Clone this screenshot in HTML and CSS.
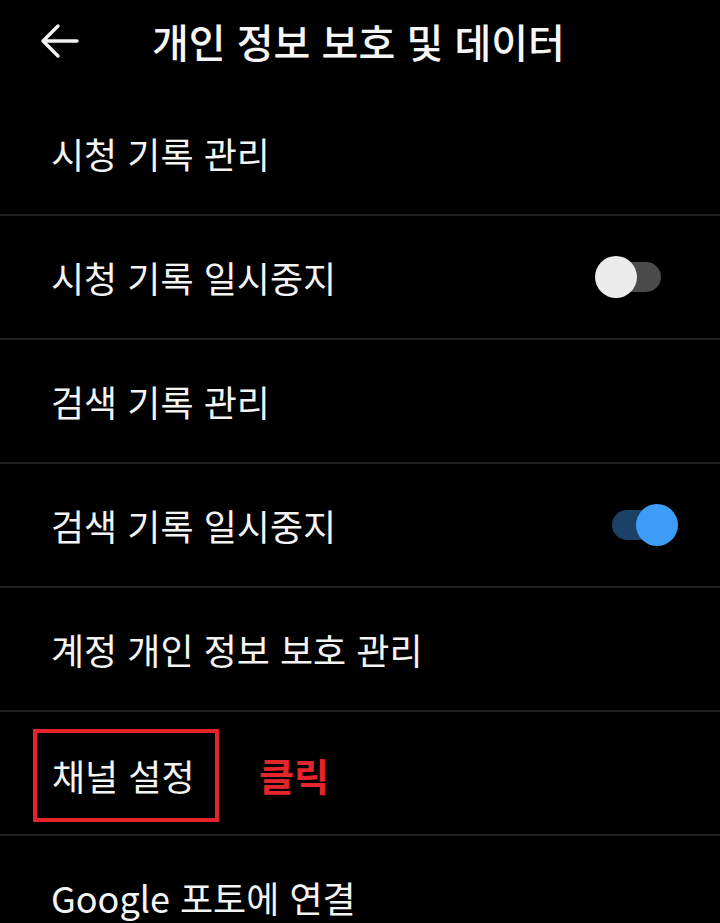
FILE: index.html
```html
<!DOCTYPE html>
<html lang="ko">
<head>
<meta charset="utf-8">
<link rel="stylesheet" href="styles.css">
</head>
<body>
<div class="screen">
  <header class="header">
    <span class="back">
      <svg width="40" height="36" viewBox="0 0 40 36"><path d="M38 18H4M19 3L4 18l15 15" fill="none" stroke="#f2f2f2" stroke-width="3.4" stroke-linecap="round" stroke-linejoin="round"/></svg>
    </span>
    <h1 class="title">개인 정보 보호 및 데이터</h1>
  </header>
  <ul class="list">
    <li class="row"><span class="label">시청 기록 관리</span></li>
    <li class="row"><span class="label">시청 기록 일시중지</span><span class="toggle off"><span class="knob"></span></span></li>
    <li class="row"><span class="label">검색 기록 관리</span></li>
    <li class="row"><span class="label">검색 기록 일시중지</span><span class="toggle on"><span class="knob"></span></span></li>
    <li class="row"><span class="label">계정 개인 정보 보호 관리</span></li>
    <li class="row"><span class="boxed"><span class="label">채널 설정</span></span><span class="click">클릭</span></li>
    <li class="row"><span class="label">Google 포토에 연결</span></li>
  </ul>
</div>
</body>
</html>
```
FILE: styles.css
```css
html, body {
  margin: 0;
  padding: 0;
  background: #000;
}
.screen {
  width: 720px;
  height: 923px;
  overflow: hidden;
  background: #000;
  color: #f4f4f4;
  font-family: "Noto Sans CJK KR", "Noto Sans", sans-serif;
}
.header {
  height: 92px;
  display: flex;
  align-items: center;
  box-sizing: border-box;
  padding-bottom: 10px;
}
.back {
  width: 40px;
  height: 36px;
  margin-left: 39px;
  display: flex;
}
.title {
  margin: 0 0 0 73px;
  font-size: 40px;
  font-weight: 500;
  letter-spacing: 0;
  color: #f6f6f6;
}
.list {
  list-style: none;
  margin: 0;
  padding: 0;
}
.row {
  height: 122px;
  border-bottom: 2px solid #1e1e1e;
  display: flex;
  align-items: center;
  padding-left: 51px;
  position: relative;
}
.label {
  font-size: 36px;
  font-weight: 400;
  color: #f4f4f4;
}
.toggle {
  position: absolute;
  left: 612px;
  top: 46px;
  width: 49px;
  height: 30px;
  border-radius: 15px;
}
.toggle .knob {
  position: absolute;
  top: -6px;
  width: 42px;
  height: 42px;
  border-radius: 50%;
}
.toggle.off { background: #4b4b4b; }
.toggle.off .knob { left: -17px; background: #ececec; }
.toggle.on { background: #1c4166; }
.toggle.on .knob { left: 24px; background: #3d9df6; }
.boxed {
  margin-left: -18px;
  border: 4px solid #e4242b;
  width: 163px;
  height: 85px;
  box-sizing: content-box;
  display: flex;
  align-items: center;
  padding-left: 15px;
  margin-top: 4px;
}
.click {
  margin-left: 40px;
  margin-top: 2px;
  font-size: 38px;
  font-weight: 700;
  color: #e5252c;
}
```
